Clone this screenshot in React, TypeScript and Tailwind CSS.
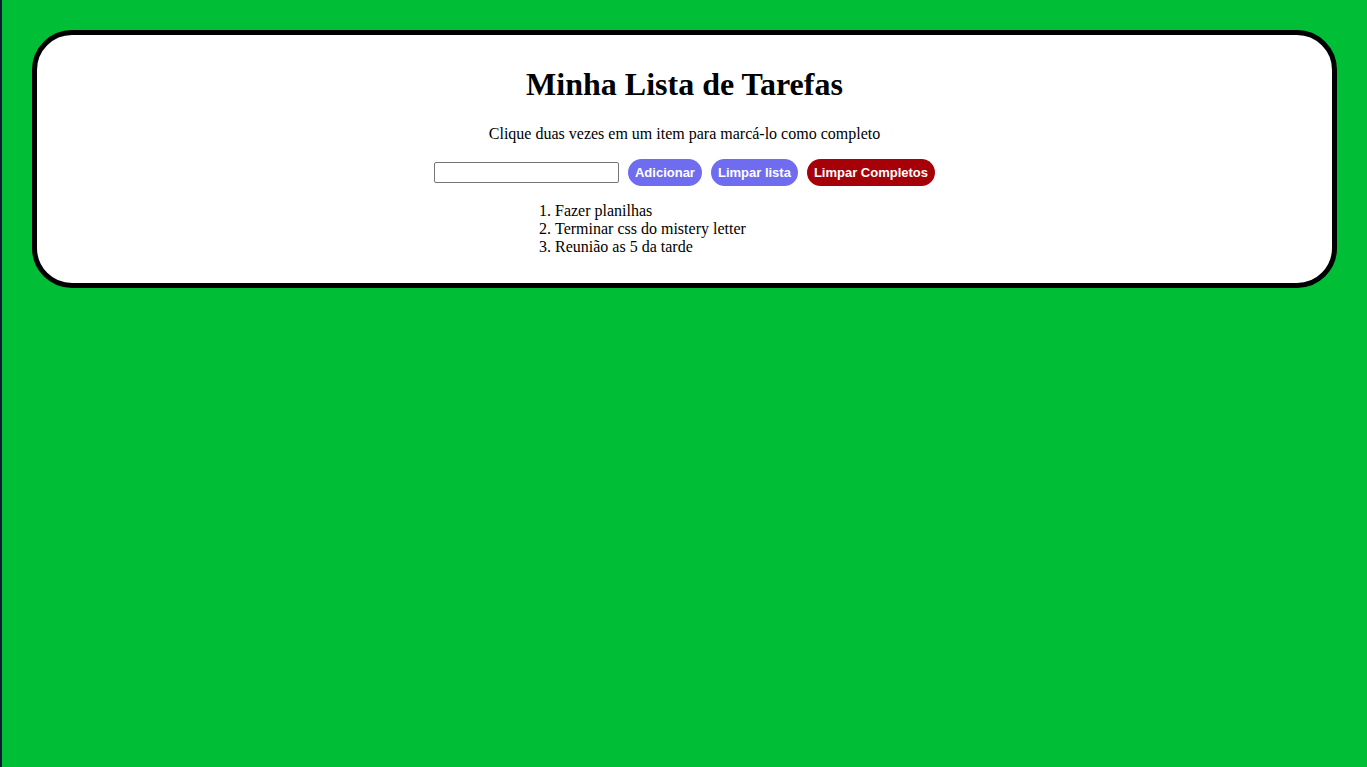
export default function App() {
  const items = ["Fazer planilhas", "Terminar css do mistery letter", "Reunião as 5 da tarde"];
  return (
    <div className="min-h-[767px] bg-[#00be36] border-l-2 border-[#111a2e] pt-[30px] font-['Liberation_Serif',serif] text-black">
      <div className="mx-[30px] border-[5px] border-black rounded-[40px] bg-white p-[10px]">
        <h1 className="text-[32px] font-bold text-center leading-[37px] mt-[21px] mb-[22px]">Minha Lista de Tarefas</h1>
        <p className="text-[16px] leading-[18px] text-center mb-[16px]">Clique duas vezes em um item para marcá-lo como completo</p>
        <div className="flex justify-center items-center gap-[9px] h-[27px]">
          <input type="text" className="w-[185px] h-[21px] border border-[#767676] rounded-[2px] bg-white" />
          <button className="h-[27px] px-[7px] rounded-full bg-[#6f6cf0] text-white font-bold text-[13px] font-['Liberation_Sans',Arial,sans-serif]">Adicionar</button>
          <button className="h-[27px] px-[7px] rounded-full bg-[#6f6cf0] text-white font-bold text-[13px] font-['Liberation_Sans',Arial,sans-serif]">Limpar lista</button>
          <button className="h-[27px] px-[7px] rounded-full bg-[#a60008] text-white font-bold text-[13px] font-['Liberation_Sans',Arial,sans-serif]">Limpar Completos</button>
        </div>
        <ol className="list-decimal list-inside text-[16px] leading-[18px] mt-[16px] mb-[17px] pl-[492px]">
          {items.map((t) => (
            <li key={t}>{t}</li>
          ))}
        </ol>
      </div>
    </div>
  );
}
